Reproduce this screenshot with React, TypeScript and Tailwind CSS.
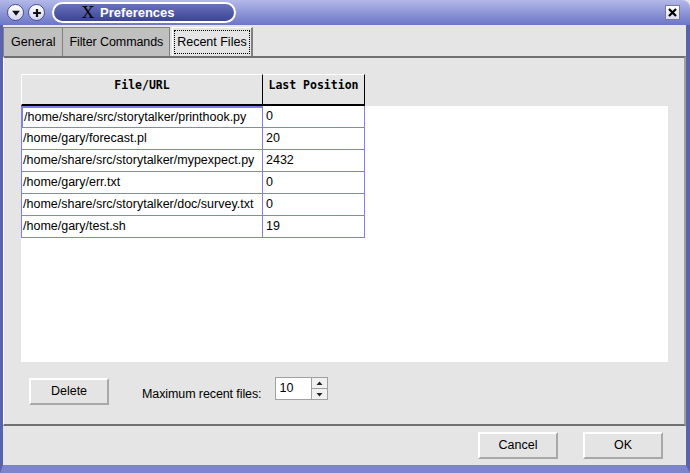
import React from "react";

const rows = [
  { file: "/home/share/src/storytalker/printhook.py", pos: "0" },
  { file: "/home/gary/forecast.pl", pos: "20" },
  { file: "/home/share/src/storytalker/mypexpect.py", pos: "2432" },
  { file: "/home/gary/err.txt", pos: "0" },
  { file: "/home/share/src/storytalker/doc/survey.txt", pos: "0" },
  { file: "/home/gary/test.sh", pos: "19" },
];

const sans = "font-['Liberation_Sans',Arial,sans-serif]";
const mono = "font-['DejaVu_Sans_Mono',monospace]";

const RoundBtn = ({ children }: { children: React.ReactNode }) => (
  <div className="w-[17px] h-[17px] rounded-full bg-gradient-to-b from-white to-[#d0d4f0] border border-[#4a5090] flex items-center justify-center">
    {children}
  </div>
);

const Button = ({ label, className = "" }: { label: string; className?: string }) => (
  <button
    className={`w-[80px] h-[27px] bg-[#e4e4e4] border-2 border-t-white border-l-white border-r-[#a8a8a8] border-b-[#a8a8a8] text-[12.5px] text-black ${sans} ${className}`}
  >
    {label}
  </button>
);

export default function App() {
  return (
    <div className={`w-[690px] h-[473px] flex flex-col bg-[#e5e5e5] overflow-hidden ${sans}`}>
      {/* title bar */}
      <div className="h-[25px] flex items-center bg-gradient-to-b from-[#b4b8e8] to-[#6c76c6] rounded-tr-[8px] pl-[7px] pr-[6px] shrink-0">
        <div className="flex gap-[4px]">
          <RoundBtn>
            <svg width="10" height="10" viewBox="0 0 9 9">
              <path d="M1 2.5h7L4.5 7z" fill="#111" />
            </svg>
          </RoundBtn>
          <RoundBtn>
            <svg width="10" height="10" viewBox="0 0 9 9">
              <path d="M3.5 1h2v2.5H8v2H5.5V8h-2V5.5H1v-2h2.5z" fill="#111" />
            </svg>
          </RoundBtn>
        </div>
        <div className="ml-[7px] w-[184px] h-[21px] rounded-full border-2 border-white bg-gradient-to-b from-[#6a72bc] to-[#3c4494] flex items-center pl-[28px]">
          <span className="font-['DejaVu_Serif',serif] text-[17px] leading-none text-black mr-[6px]">X</span>
          <span className="text-white font-bold text-[13px]">Preferences</span>
        </div>
        <div className="ml-auto mr-[4px] w-[15px] h-[15px] bg-gradient-to-b from-white to-[#dcdcec] border border-[#7a7a9a] flex items-center justify-center">
          <svg width="9" height="9" viewBox="0 0 9 9">
            <path d="M1 1l7 7M8 1L1 8" stroke="#000" strokeWidth="2.2" />
          </svg>
        </div>
      </div>

      {/* window body */}
      <div className="flex-1 flex flex-col border-l-[3px] border-r-[4px] border-b-[8px] border-l-[#5a62b0] border-r-[#5a62b0] border-b-[#7c84cc]">
        {/* tabs */}
        <div className="flex items-end h-[31px] pt-[2px] text-[12.5px] text-black">
          <div className="h-[29px] px-[7px] flex items-center bg-[#c0c0c0] border border-[#808080] border-b-0">General</div>
          <div className="h-[29px] px-[6px] flex items-center bg-[#c0c0c0] border border-l-0 border-[#808080] border-b-0 tracking-[-0.1px]">Filter Commands</div>
          <div className="h-[29px] ml-[2px] px-[1px] flex items-center bg-[#e5e5e5] border-t border-l border-t-white border-l-white border-r-2 border-r-[#808080]">
            <span className="px-[2px] py-[2px] border border-dotted border-black">Recent Files</span>
          </div>
        </div>

        {/* tab panel */}
        <div className="h-[370px] flex flex-col border-t-2 border-t-[#707070] border-l border-l-white border-r-2 border-r-[#a0a0a0] border-b-2 border-b-[#707070] pt-[16px] pl-[17px] pr-[16px]">
          <div className="h-[288px] flex flex-col">
            {/* header */}
            <div className="flex h-[32px] shrink-0">
              <div className={`w-[242px] flex items-start justify-center pt-[2px] border-t border-l border-t-white border-l-white border-b-2 border-b-black border-r border-r-black font-bold text-[11.5px] ${mono}`}>
                File/URL
              </div>
              <div className={`w-[102px] flex items-start justify-center pt-[2px] border-t border-t-white border-b-2 border-b-black border-r border-r-black font-bold text-[11.5px] ${mono}`}>
                Last Position
              </div>
            </div>
            {/* rows */}
            <div className="flex-1 bg-white">
              {rows.map((r, i) => (
                <div key={i} className="flex h-[22px] text-[12.5px] text-black">
                  <div
                    className={`w-[242px] flex items-center pl-[1px] border-b border-r border-[#8080e8] ${
                      i === 0 ? "border-2 border-[#6c6ce0]" : "border-l border-l-[#8080e8]"
                    }`}
                  >
                    {r.file}
                  </div>
                  <div className="w-[102px] flex items-center pl-[3px] border-b border-r border-[#8080e8]">{r.pos}</div>
                </div>
              ))}
            </div>
          </div>

          {/* controls */}
          <div className="flex items-start mt-[16px] pl-[8px] text-[12.5px]">
            <Button label="Delete" />
            <span className="ml-[33px] mt-[7px] tracking-[-0.1px]">Maximum recent files:</span>
            <div className="ml-[14px] -mt-[1px] flex h-[23px] border border-[#a0a0a0]">
              <div className="w-[35px] bg-white pl-[3px] flex items-center">10</div>
              <div className="w-[16px] flex flex-col border-l border-[#a0a0a0]">
                <div className="flex-1 flex items-center justify-center bg-[#f0f0f0] border-b border-[#a0a0a0]">
                  <svg width="7" height="5" viewBox="0 0 7 5"><path d="M3.5 0.5L6.5 4H0.5z" fill="#222" /></svg>
                </div>
                <div className="flex-1 flex items-center justify-center bg-[#f0f0f0]">
                  <svg width="7" height="5" viewBox="0 0 7 5"><path d="M0.5 1h6L3.5 4.5z" fill="#222" /></svg>
                </div>
              </div>
            </div>
          </div>
        </div>

        {/* footer */}
        <div className="flex justify-end gap-[25px] pt-[6px] pr-[23px]">
          <Button label="Cancel" />
          <Button label="OK" />
        </div>
      </div>
    </div>
  );
}
